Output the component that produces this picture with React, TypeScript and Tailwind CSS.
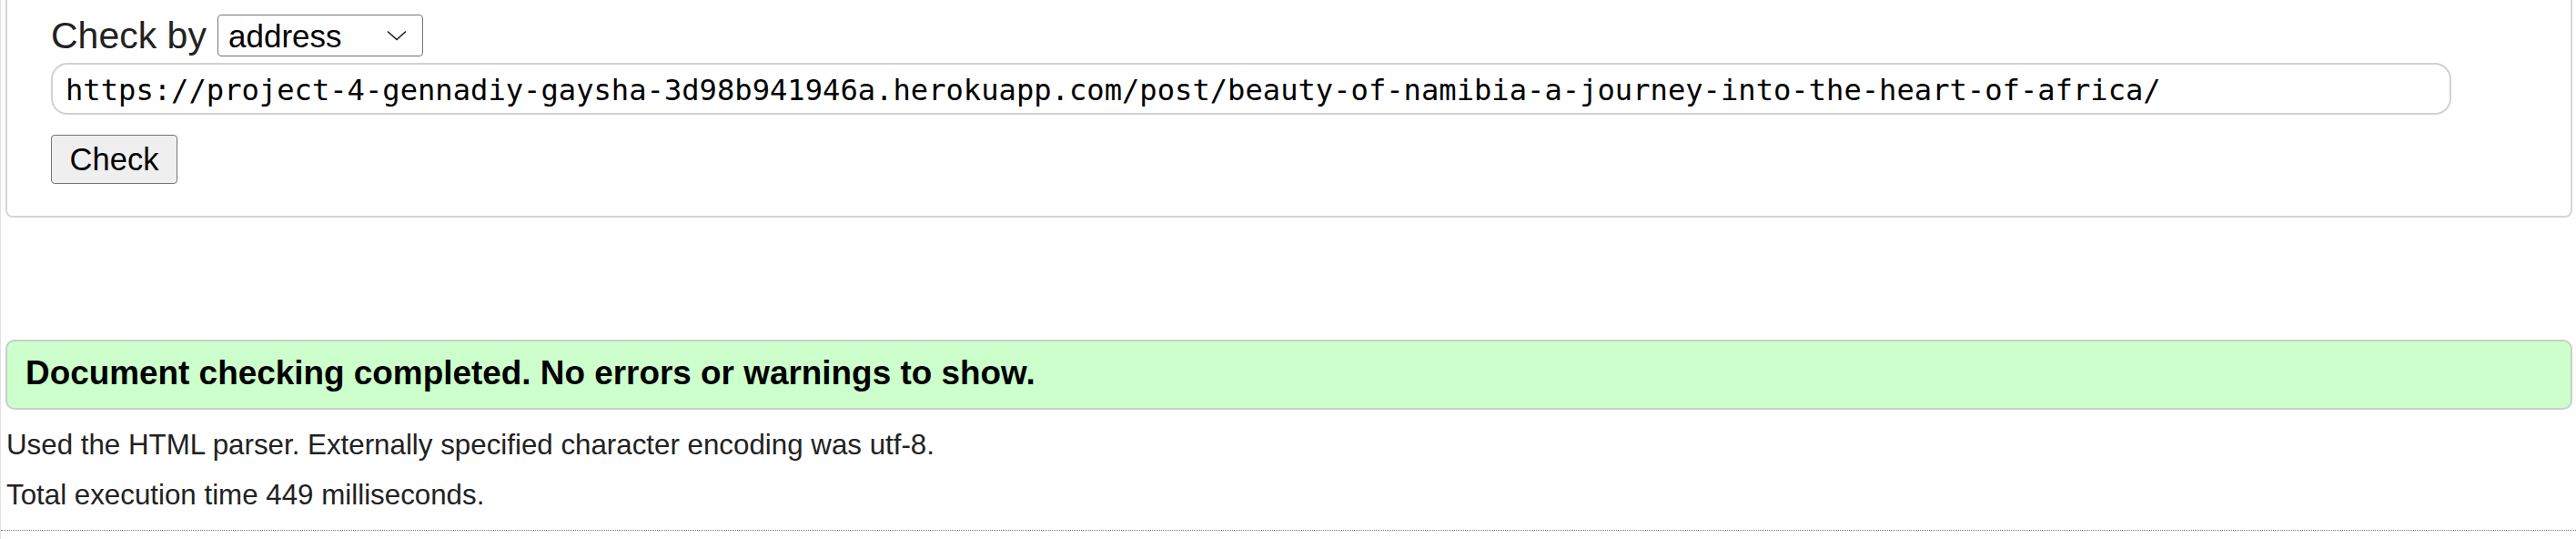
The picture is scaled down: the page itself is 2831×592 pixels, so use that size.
import React from "react";

export default function App() {
  const sans = { fontFamily: '"Liberation Sans", Arial, sans-serif' };
  return (
    <div className="w-[2831px] h-[592px] bg-white overflow-hidden border-l border-[#e2e2e2]" style={sans}>
      {/* form fieldset (top edge is scrolled out of view) */}
      <div className="ml-[5px] mr-[4px] h-[239px] border-x-2 border-b-2 border-[#d6d6d6] rounded-b-[8px] pl-[48px] pt-[16px]">
        <div className="flex items-center h-[46px]">
          <span className="w-[183px] text-[41px] leading-none text-[#222222] whitespace-nowrap">Check by</span>
          <div className="w-[226px] h-[46px] border border-[#767676] rounded-[4px] flex items-center justify-between pl-[11px] pr-[17px] bg-white">
            <span className="text-[35px] leading-none text-black">address</span>
            <svg width="22" height="12" viewBox="0 0 22 12" fill="none">
              <path d="M1 1.5 L11 10.5 L21 1.5" stroke="#1a1a1a" strokeWidth="1.6" />
            </svg>
          </div>
        </div>
        <div className="mt-[7px] w-[2638px] h-[57px] border-2 border-[#d2d2d2] rounded-[18px] flex items-center pl-[14px] pt-[4px]">
          <span
            className="text-[32.15px] leading-none text-black whitespace-nowrap"
            style={{ fontFamily: '"DejaVu Sans Mono", "Liberation Mono", monospace' }}
          >
            https://project-4-gennadiy-gaysha-3d98b941946a.herokuapp.com/post/beauty-of-namibia-a-journey-into-the-heart-of-africa/
          </span>
        </div>
        <button
          type="button"
          className="mt-[22px] w-[139px] h-[54px] bg-[#efefef] border-[1.5px] border-[#767676] rounded-[4px] flex items-center justify-center text-[34.5px] leading-none text-black"
          style={sans}
        >
          Check
        </button>
      </div>

      {/* result */}
      <div className="mt-[134px] ml-[5px] mr-[4px] h-[77px] bg-[#ccffcc] border-2 border-[#cccccc] rounded-[10px] flex items-center pl-[20px] pb-[2px]">
        <h2 className="text-[36.9px] leading-none font-bold text-black whitespace-nowrap">
          Document checking completed. No errors or warnings to show.
        </h2>
      </div>
      <p className="mt-[19px] ml-[6px] text-[31.3px] leading-[40px] text-[#222222] whitespace-nowrap">
        Used the HTML parser. Externally specified character encoding was utf-8.
      </p>
      <p className="mt-[15px] ml-[6px] text-[31.3px] leading-[40px] text-[#222222] whitespace-nowrap">
        Total execution time 449 milliseconds.
      </p>
      <div className="mt-[18px] border-t border-dotted border-[#7a7a7a]" />
    </div>
  );
}
